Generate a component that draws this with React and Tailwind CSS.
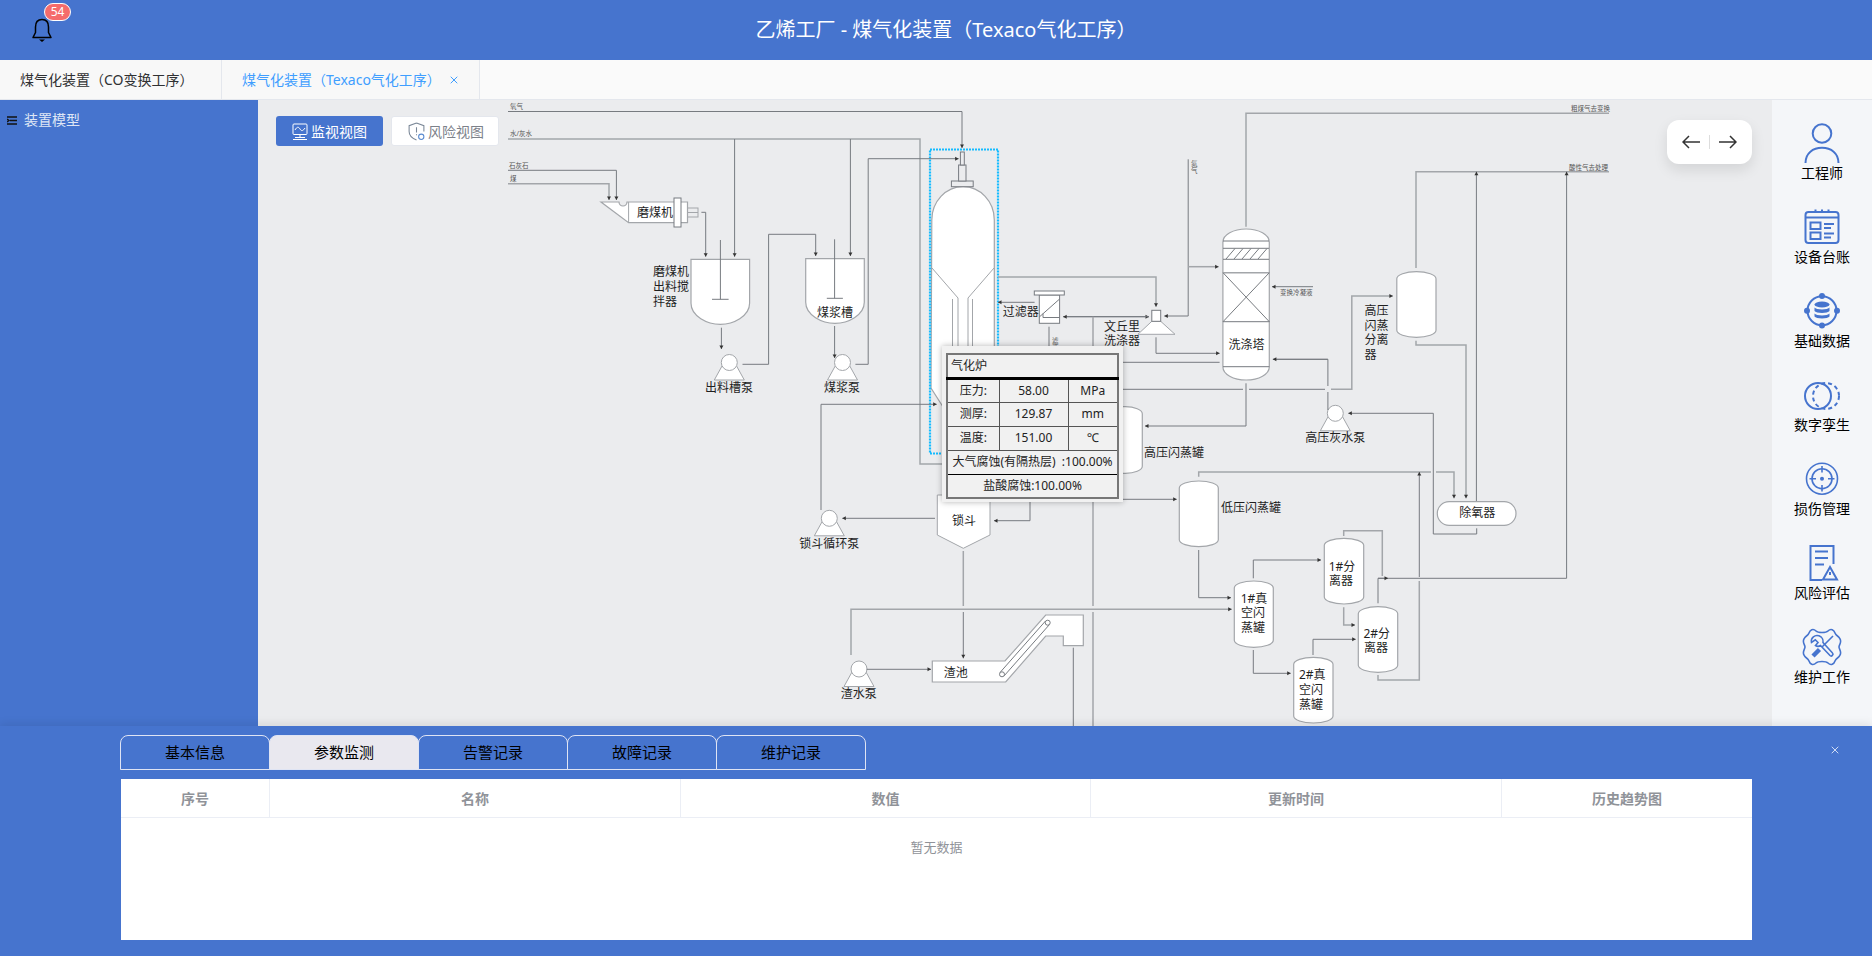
import React from 'react';
import { X } from 'lucide-react';

const BLUE = '#4674ce';
const LINE = '#777b80';
const SOFT = '#a3a6aa';

// pipes in page coordinates: p = points, a = arrow at the end, s = lighter/thicker stroke
const pipes = [
  { p: [[508, 111.5], [962, 111.5], [962, 148]], a: true },
  { p: [[508, 139], [920, 139], [920, 464], [945, 464]], s: true },
  { p: [[508, 170.3], [616.4, 170.3], [616.4, 200]], a: true },
  { p: [[508, 183.7], [609, 183.7], [609, 200]], a: true, s: true },
  { p: [[701.4, 212.3], [705.7, 212.3], [705.7, 256.7]], a: true },
  { p: [[734.6, 139], [734.6, 256.7]], a: true },
  { p: [[721.4, 327.7], [721.4, 349]], a: true },
  { p: [[742.5, 364.3], [768.6, 364.3], [768.6, 234.3], [815.7, 234.3], [815.7, 256]], a: true },
  { p: [[850.4, 139], [850.4, 256]], a: true },
  { p: [[834.6, 326], [834.6, 358]], a: true },
  { p: [[855.4, 364.3], [868.2, 364.3], [868.2, 158.7], [958.6, 158.7]], a: true },
  { p: [[1034.6, 302.3], [998, 302.3]], a: true },
  { p: [[998, 277], [1156, 277], [1156, 306.7]], a: true, s: true },
  { p: [[1063.2, 316.7], [1149, 316.7]], a: true },
  { p: [[1149, 316.7], [1063.2, 316.7]], a: true },
  { p: [[1093, 316.7], [1093, 606]], s: true },
  { p: [[1093, 612], [1093, 726]], s: true },
  { p: [[1049, 326.7], [1049, 350]] },
  { p: [[1188.2, 159.3], [1188.2, 316], [1164.3, 316]], a: true },
  { p: [[1188.2, 266.7], [1218.6, 266.7]], a: true, s: true },
  { p: [[1156, 337.3], [1156, 353.3], [1219.6, 353.3]], a: true },
  { p: [[1120, 362.3], [1219.6, 362.3]] },
  { p: [[1120, 389.3], [1243, 389.3]] },
  { p: [[1249, 389.3], [1325, 389.3]] },
  { p: [[1331, 389.3], [1351.8, 389.3], [1351.8, 296], [1392.9, 296]], a: true, s: true },
  { p: [[1246, 383.3], [1246, 426], [1145, 426]], a: true },
  { p: [[1246, 226.7], [1246, 113.3], [1609, 113.3]], s: true },
  { p: [[1416, 268], [1416, 171.7], [1609, 171.7]], s: true },
  { p: [[1416, 340.7], [1416, 345], [1466, 345], [1466, 498.3]], a: true, s: true },
  { p: [[1476.4, 501], [1476.4, 171.7]], a: true },
  { p: [[1566.6, 578.3], [1566.6, 171.7]], a: true },
  { p: [[1272.9, 359.3], [1327.9, 359.3], [1327.9, 386]] },
  { p: [[1327.9, 392], [1327.9, 410]] },
  { p: [[1327.9, 359.3], [1272.9, 359.3]], a: true },
  { p: [[1313, 286.7], [1272, 286.7]], a: true },
  { p: [[1476.7, 528.3], [1476.7, 534], [1433.3, 534], [1433.3, 413.3], [1348.3, 413.3]], a: true },
  { p: [[1198.7, 476.7], [1198.7, 472], [1431, 472]], s: true },
  { p: [[1436, 472], [1454, 472], [1454, 498.3]], a: true, s: true },
  { p: [[1120, 499.3], [1176.7, 499.3]], a: true },
  { p: [[1030, 500], [1030, 520.7], [994, 520.7]], a: true },
  { p: [[935, 518.3], [842.3, 518.3]], a: true },
  { p: [[821, 510], [821, 404.3], [936.7, 404.3]], a: true },
  { p: [[963.3, 551], [963.3, 606]], s: true },
  { p: [[963.3, 612], [963.3, 658.3]], a: true },
  { p: [[851, 655], [851, 609.3], [1231.7, 609.3]], a: true, s: true },
  { p: [[866.7, 669.3], [931, 669.3]], a: true },
  { p: [[1073.3, 647.7], [1073.3, 726]] },
  { p: [[1198.7, 550], [1198.7, 597.7], [1231, 597.7]], a: true },
  { p: [[1253.3, 578.3], [1253.3, 560], [1321, 560]], a: true },
  { p: [[1253.3, 650], [1253.3, 673.3], [1290.7, 673.3]], a: true },
  { p: [[1343.7, 536], [1343.7, 530.7], [1382.3, 530.7], [1382.3, 576]], s: true },
  { p: [[1566.6, 578.3], [1378, 578.3]] },
  { p: [[1378, 603.3], [1378, 578.3], [1388, 578.3]], a: true },
  { p: [[1343.7, 607.3], [1343.7, 625], [1355, 625]], a: true, s: true },
  { p: [[1313, 655], [1313, 639.3], [1355.7, 639.3]], a: true },
  { p: [[1378, 675], [1378, 680], [1419.3, 680], [1419.3, 581]], s: true },
  { p: [[1419.3, 577], [1419.3, 472]], a: true },
];

const labels = [
  ['磨煤机', 655, 212.7],
  ['煤浆槽', 835, 312],
  ['出料槽泵', 729, 387.3],
  ['煤浆泵', 842, 387],
  ['过滤器', 1020.7, 311.7],
  ['洗涤塔', 1246.4, 344],
  ['高压闪蒸罐', 1174, 452.7],
  ['低压闪蒸罐', 1251, 507.7],
  ['锁斗', 964, 520.7],
  ['锁斗循环泵', 829.3, 543.3],
  ['渣水泵', 858.7, 693.3],
  ['渣池', 955.7, 672],
  ['高压灰水泵', 1335.3, 437.3],
  ['除氧器', 1477.3, 512.7],
  ['1#真', 1254, 598.3],
  ['空闪', 1253, 612.7],
  ['蒸罐', 1253, 627.3],
  ['1#分', 1342, 566],
  ['离器', 1341, 580.3],
  ['2#分', 1376.7, 633.3],
  ['离器', 1376, 647.3],
  ['2#真', 1312.3, 674.3],
  ['空闪', 1311, 689.3],
  ['蒸罐', 1311, 704],
  ['磨煤机', 671, 271.7],
  ['出料搅', 671, 286.7],
  ['拌器', 665, 301.7],
  ['文丘里', 1122, 326],
  ['洗涤器', 1122, 340.7],
  ['高压', 1376.6, 310],
  ['闪蒸', 1376.6, 325],
  ['分离', 1376.6, 339.3],
  ['器', 1370.6, 354],
];

const tinyLabels = [
  ['氧气', 510, 106],
  ['水/灰水', 510, 133],
  ['石灰石', 509, 165],
  ['煤', 510, 178],
  ['粗煤气去变换', 1571, 108],
  ['酸性气去处理', 1569, 167],
  ['变换冷凝液', 1280, 292],
  ['氮', 1191, 163],
  ['气', 1191, 170],
  ['滤', 1052, 340],
  ['液', 1052, 347],
];

const arrowHead = (pts) => {
  const [x1, y1] = pts[pts.length - 2];
  const [x2, y2] = pts[pts.length - 1];
  const len = Math.hypot(x2 - x1, y2 - y1) || 1;
  const ux = (x2 - x1) / len;
  const uy = (y2 - y1) / len;
  const bx = x2 - ux * 3.5;
  const by = y2 - uy * 3.5;
  return `${x2},${y2} ${bx - uy * 2},${by + ux * 2} ${bx + uy * 2},${by - ux * 2}`;
};

const capsule = (x, y, w, h, c) =>
  `M${x} ${y + c}A${w / 2} ${c} 0 0 1 ${x + w} ${y + c}V${y + h - c}A${w / 2} ${c} 0 0 1 ${x} ${y + h - c}Z`;

const Vessel = ({ x, y, w, h, c = 7 }) => (
  <path d={capsule(x, y, w, h, c)} fill="#fff" stroke={SOFT} strokeWidth="1.2" />
);

const Pump = ({ cx, cy }) => (
  <g fill="#fff" stroke={SOFT} strokeWidth="1">
    <polygon points={`${cx - 15},${cy + 17.5} ${cx + 15},${cy + 17.5} ${cx + 7},${cy + 3} ${cx - 7},${cy + 3}`} />
    <circle cx={cx} cy={cy} r="8" />
  </g>
);

const Tank = ({ x, y, w, h }) => (
  <path
    d={`M${x} ${y}H${x + w}V${y + h - 21}C${x + w} ${y + h - 8} ${x + w * 0.72} ${y + h} ${x + w / 2} ${y + h}C${x + w * 0.28} ${y + h} ${x} ${y + h - 8} ${x} ${y + h - 21}Z`}
    fill="#fff"
    stroke={SOFT}
    strokeWidth="1.2"
  />
);

const Diagram = () => (
  <svg className="absolute left-0 top-0" width="1514" height="626" viewBox="258 100 1514 626" fill="none">
    {/* grinder */}
    <path
      d="M601 202H619A4 4 0 0 0 627 202H687.5V222.7H628.6Z"
      fill="#fff"
      stroke={SOFT}
      strokeWidth="1.2"
    />
    <path d="M628.6 202V222.7" stroke={SOFT} />
    <rect x="674" y="198" width="7" height="29" fill="#fff" stroke={LINE} />
    <rect x="687.5" y="208" width="10.5" height="9" stroke={SOFT} />
    <path d="M687.5 212.5H698" stroke={SOFT} />

    <Tank x={691} y={259.3} w={58.6} h={65} />
    <path d="M720.4 240V299.3M712 299.3H728.6" stroke={LINE} />
    <Tank x={805.7} y={258.7} w={58.6} h={64.6} />
    <path d="M834.6 239.3V298.3M826.8 298.3H842.9" stroke={LINE} />

    {/* gasifier */}
    <path d="M931.8 220A31.25 33.3 0 0 1 994.3 220V388L980 410H945L931 388Z" fill="#fff" stroke={SOFT} strokeWidth="1.2" />
    <path d="M932 268L958 298V346M994 268L968 298V346M952.5 299V346M972.5 299V346" stroke={SOFT} />
    <rect x="951.4" y="181" width="21.8" height="5.7" fill="#ebecee" stroke={LINE} />
    <rect x="958.6" y="165" width="7.4" height="16" fill="#ebecee" stroke={LINE} />
    <rect x="960.4" y="152" width="3.9" height="13" fill="#ebecee" stroke={LINE} />
    <rect x="930" y="149.5" width="68" height="304" stroke="#14bbff" strokeWidth="2.2" strokeDasharray="2 1" />

    {/* filter */}
    <rect x="1039.3" y="295" width="20.3" height="28.3" fill="#fff" stroke={LINE} />
    <rect x="1034.3" y="291" width="30" height="4" fill="#fff" stroke={LINE} />
    <path d="M1039.3 317L1059.6 299M1043 313.5V317.5H1059.6" stroke={LINE} />

    {/* venturi */}
    <polygon points="1137.9,334.3 1175,334.3 1160.7,321.3 1151.8,321.3" fill="#fff" stroke={SOFT} />
    <rect x="1151.8" y="310.3" width="8.9" height="11" fill="#fff" stroke={LINE} />

    {/* washer */}
    <Vessel x={1222.9} y={229} w={46.4} h={151} c={13} />
    <path d="M1223 241H1269M1223 248.3H1269M1223 259.3H1269" stroke={LINE} />
    <path d="M1223 272.7H1269.3" stroke={SOFT} strokeWidth="1.6" />
    <path d="M1223 321.7H1269.3M1223 366.7H1269.3M1223 272.7L1269.3 321.7M1269.3 272.7L1223 321.7" stroke={LINE} />
    <path d="M1226 259L1235 248.5M1234 259L1243 248.5M1242 259L1251 248.5M1250 259L1259 248.5M1258 259L1267 248.5" stroke={LINE} />

    <Vessel x={1396.8} y={271.7} w={39.2} h={65.6} />
    <Vessel x={1179.3} y={481} w={39} h={65.7} />
    <path d="M1100 406.7H1125A17 7 0 0 1 1142.3 413.7V466.3A17 7 0 0 1 1125 473.3H1100Z" fill="#fff" stroke={SOFT} strokeWidth="1.2" />
    <Vessel x={1234.3} y={581} w={39} h={66.3} />
    <Vessel x={1324.3} y={538.3} w={39.4} h={65.7} />
    <Vessel x={1358.3} y={606.7} w={39.4} h={65.6} />
    <Vessel x={1293.7} y={657.3} w={39.3} h={65.7} />
    <rect x="1437.3" y="501.7" width="78.7" height="23.6" rx="11.8" fill="#fff" stroke={SOFT} strokeWidth="1.2" />

    {/* lock hopper */}
    <polygon points="937.3,495 990,495 990,535 963.3,548.3 937.3,535" fill="#fff" stroke={SOFT} />

    {/* slag pool and conveyor */}
    <polygon
      points="932.3,661 1005,661 1045.7,615 1083.3,615 1083.3,645.7 1063.3,645.7 1063.3,636 1045.7,636 1005.7,682 932.3,682"
      fill="#fff"
      stroke={SOFT}
      strokeWidth="1.2"
    />
    <path d="M1000 672.5L1045.5 621M1004 676L1049.5 624.5" stroke={LINE} />
    <circle cx="1002" cy="674.3" r="2.5" fill="#fff" stroke={LINE} />
    <circle cx="1047.7" cy="622.7" r="2.5" fill="#fff" stroke={LINE} />

    <Pump cx={729.3} cy={362.5} />
    <Pump cx={842.5} cy={362.5} />
    <Pump cx={829.3} cy={518.3} />
    <Pump cx={859} cy={669} />
    <Pump cx={1335.3} cy={413.3} />

    {pipes.map((pipe, i) => (
      <g key={i}>
        <polyline
          points={pipe.p.map((pt) => pt.join(',')).join(' ')}
          stroke={pipe.s ? SOFT : LINE}
          strokeWidth={pipe.s ? 1.5 : 1}
        />
        {pipe.a && <polygon points={arrowHead(pipe.p)} fill="#333" />}
      </g>
    ))}

    {labels.map(([t, x, y], i) => (
      <text key={i} x={x} y={y} textAnchor="middle" dominantBaseline="central" fontSize="12" fill="#1f1f1f">
        {t}
      </text>
    ))}
    {tinyLabels.map(([t, x, y], i) => (
      <text key={i} x={x} y={y} fontSize="6.5" fill="#555" dominantBaseline="central">
        {t}
      </text>
    ))}
  </svg>
);

const Popup = () => (
  <div className="absolute left-[684px] top-[246px] w-[181px] h-[156px] bg-[#f1f1f1] shadow-[0_0_6px_rgba(0,0,0,0.3)] pl-[4px] pt-[7px]">
    <table className="w-[173px] h-[146px] border-2 border-[#777] border-collapse table-fixed text-[12px] text-[#222] text-center">
      <colgroup>
        <col className="w-[52px]" />
        <col className="w-[69px]" />
        <col />
      </colgroup>
      <tbody>
        <tr className="h-[24px] border-b-[3px] border-black">
          <td colSpan={3} className="text-left pl-[3px]">气化炉</td>
        </tr>
        {[
          ['压力:', '58.00', 'MPa'],
          ['测厚:', '129.87', 'mm'],
          ['温度:', '151.00', '℃'],
        ].map(([a, b, c]) => (
          <tr key={a} className="h-[24px] border-b border-[#555]">
            <td className="border-r border-[#555]">{a}</td>
            <td className="border-r border-[#555]">{b}</td>
            <td>{c}</td>
          </tr>
        ))}
        <tr className="h-[24px] border-b border-black">
          <td colSpan={3} className="whitespace-nowrap">大气腐蚀(有隔热层) &nbsp;:100.00%</td>
        </tr>
        <tr className="h-[24px]">
          <td colSpan={3}>盐酸腐蚀:100.00%</td>
        </tr>
      </tbody>
    </table>
  </div>
);

const EngineerIcon = () => (
  <svg width="40" height="40" viewBox="0 0 40 40" fill="none" stroke={BLUE} strokeWidth="2">
    <circle cx="20" cy="10.5" r="9.3" />
    <path d="M3.5 40C3.5 30 11 24.8 20 24.8S36.5 30 36.5 40" />
  </svg>
);

const LedgerIcon = () => (
  <svg width="40" height="40" viewBox="0 0 40 40" fill="none" stroke={BLUE} strokeWidth="2">
    <rect x="3.5" y="5" width="33" height="31" rx="3" />
    <path d="M3.5 10.5H36.5M13.5 2.5V5.5M20 2.5V5.5M26.5 2.5V5.5" />
    <rect x="8.5" y="15.5" width="10" height="6.5" />
    <rect x="8.5" y="25.5" width="10" height="6.5" />
    <path d="M22 17H32M22 21H29M22 26.5H32M22 30.5H29" />
  </svg>
);

const DataIcon = () => (
  <svg width="40" height="40" viewBox="0 0 40 40" fill="none">
    <circle cx="20" cy="19.7" r="14.5" stroke={BLUE} strokeWidth="2" />
    <g fill={BLUE}>
      <circle cx="20" cy="5" r="3" />
      <circle cx="20" cy="34.5" r="3" />
      <circle cx="5" cy="19.7" r="3" />
      <circle cx="35" cy="19.7" r="3" />
      <ellipse cx="20" cy="13.5" rx="7.5" ry="3" />
      <path d="M12.5 16.5C14 19 26 19 27.5 16.5V20C26 22.5 14 22.5 12.5 20Z" />
      <path d="M12.5 22.5C14 25 26 25 27.5 22.5V25.5C26 28 14 28 12.5 25.5Z" />
    </g>
  </svg>
);

const TwinIcon = () => (
  <svg width="40" height="40" viewBox="0 0 40 40" fill="none" stroke={BLUE} strokeWidth="2">
    <circle cx="16" cy="21" r="13" />
    <circle cx="24" cy="21" r="13" strokeDasharray="4 3" />
  </svg>
);

const TargetIcon = () => (
  <svg width="40" height="40" viewBox="0 0 40 40" fill="none" stroke={BLUE} strokeWidth="1.6">
    <circle cx="20" cy="19.7" r="15.5" />
    <circle cx="20" cy="19.7" r="10" />
    <path d="M20 7V13.5M20 26V32.5M7.5 19.7H14M26 19.7H32.5" />
    <circle cx="20" cy="19.7" r="1.2" fill={BLUE} />
  </svg>
);

const ReportIcon = () => (
  <svg width="40" height="40" viewBox="0 0 40 40" fill="none" stroke={BLUE} strokeWidth="2">
    <path d="M20 37H8.5V3H31.5V21" />
    <path d="M13 8.5H26M13 15H26M13 21.5H22" />
    <path d="M28 24L35 36.5H21Z" />
    <path d="M28 29V32" />
  </svg>
);

const ToolIcon = () => (
  <svg width="40" height="40" viewBox="0 0 40 40" fill="none" stroke={BLUE} strokeWidth="1.6">
    <path d="M14 4C16 6 24 6 26 4C29 1 32 3 33 6C34 9 37 9 38 12C40 15 37 18 37 20C37 22 40 25 38 28C37 31 34 31 33 34C32 37 29 39 26 36C24 34 16 34 14 36C11 39 8 37 7 34C6 31 3 31 2 28C0 25 3 22 3 20C3 18 0 15 2 12C3 9 6 9 7 6C8 3 11 1 14 4Z" />
    <path d="M17 8.8C13 7.5 8.5 10.5 9.5 15.5L13.3 12.8L16 15.5L13.5 18.5C15 19.5 17 19.5 18.5 18.5L28 28.5C29.5 30 32 27.5 30.5 26L21 15.5C21.5 13 20 10 17 8.8Z" />
    <path d="M31 9L20 20" />
    <path d="M17.5 22.5L11 29" strokeWidth="4.5" />
  </svg>
);

const navItems = [
  ['工程师', EngineerIcon],
  ['设备台账', LedgerIcon],
  ['基础数据', DataIcon],
  ['数字孪生', TwinIcon],
  ['损伤管理', TargetIcon],
  ['风险评估', ReportIcon],
  ['维护工作', ToolIcon],
];

const bottomTabs = ['基本信息', '参数监测', '告警记录', '故障记录', '维护记录'];

const columns = [
  ['序号', 'w-[149px]'],
  ['名称', 'w-[411px]'],
  ['数值', 'w-[410px]'],
  ['更新时间', 'w-[411px]'],
  ['历史趋势图', 'flex-1'],
];

const App = () => {
  return (
    <div
      className="w-[1872px] h-[956px] flex flex-col overflow-hidden"
      style={{ fontFamily: '"Noto Sans", "Noto Sans CJK SC", sans-serif' }}
    >
      {/* header */}
      <div className="relative h-[60px] shrink-0 bg-[#4674ce] flex items-center justify-center pl-[20px]">
        <div className="absolute left-[32px] top-[18px]">
          <svg width="20" height="24" viewBox="0 0 20 24" fill="none">
            <path d="M10 1.5C5.5 1.5 3.5 5 3.5 9V14.5L1 19.5H19L16.5 14.5V9C16.5 5 14.5 1.5 10 1.5Z" stroke="#000" strokeWidth="1.5" strokeLinejoin="round" />
            <path d="M7 21.5H13L10 24Z" fill="#000" />
          </svg>
        </div>
        <span className="absolute left-[44px] top-[3px] w-[27px] h-[18px] rounded-full bg-[#f56c6c] border border-white text-white text-[12px] leading-[16px] text-center">
          54
        </span>
        <span className="text-white text-[20px]">乙烯工厂 - 煤气化装置（Texaco气化工序）</span>
      </div>

      {/* tab strip */}
      <div className="h-[40px] shrink-0 bg-[#fafafa] border-b border-[#e4e7ed] flex text-[14px]">
        <div className="w-[222px] bg-[#f8f8f8] border-r border-[#e4e7ed] pl-[20px] flex items-center text-[#303133]">
          煤气化装置（CO变换工序）
        </div>
        <div className="w-[258px] bg-[#f8f8f8] border-r border-[#e4e7ed] pl-[20px] flex items-center text-[#409eff]">
          <span>煤气化装置（Texaco气化工序）</span>
          <X size={12} className="ml-auto mr-[19px]" />
        </div>
      </div>

      {/* main */}
      <div className="flex-1 flex min-h-0">
        <div className="w-[258px] shrink-0 bg-[#4674ce] pt-[9px] pl-[7px] flex items-start gap-[7px] text-[14px] text-[#dfe6f5]">
          <svg className="mt-[7px]" width="10" height="9" viewBox="0 0 10 9" fill="none" stroke="#111" strokeWidth="1.4">
            <path d="M0 1H10M3 4.5H10M0 8H10" />
            <path d="M0 3L2 4.5L0 6" />
          </svg>
          <span>装置模型</span>
        </div>

        <div className="relative flex-1 bg-[#ebecee] overflow-hidden">
          <Diagram />
          <Popup />

          <div className="absolute left-[18px] top-[16px] flex gap-[8px] text-[14px]">
            <div className="w-[107px] h-[30px] rounded-[3px] bg-[#4674ce] text-white flex items-center justify-center gap-[3px]">
              <svg width="16" height="17" viewBox="0 0 16 17" fill="none" stroke="#fff" strokeWidth="1">
                <rect x="1" y="1" width="14" height="10.5" rx="1" />
                <path d="M3 7C5 3.5 6.5 3.5 8 6S11 8 13 5M8 11.5V14.5M3 14.5H13M1 16.5H15" />
              </svg>
              <span>监视视图</span>
            </div>
            <div className="w-[108px] h-[30px] rounded-[3px] bg-white border border-[#e4e7ed] text-[#7c818a] flex items-center justify-center gap-[3px] pl-[2px]">
              <svg width="17" height="19" viewBox="0 0 16 18" fill="none" stroke="#7a8797" strokeWidth="1">
                <path d="M8 1L15 3.5V9M8 17C4 15.5 1 13 1 9V3.5L8 1" />
                <path d="M8 5V10M8 11.5V12.5" />
                <circle cx="12.5" cy="14" r="2.5" stroke="#5a8bd0" />
              </svg>
              <span>风险视图</span>
            </div>
          </div>

          <div className="absolute left-[1409px] top-[20px] w-[85px] h-[44px] rounded-[12px] bg-white shadow-[0_6px_14px_rgba(0,0,0,0.1)] flex items-center justify-center text-[#333]">
            <svg width="18" height="14" viewBox="0 0 18 14" fill="none" stroke="#333" strokeWidth="1.5">
              <path d="M18 7H1M7 1L1 7L7 13" />
            </svg>
            <span className="w-px h-[14px] bg-[#ddd] mx-[9px]" />
            <svg width="18" height="14" viewBox="0 0 18 14" fill="none" stroke="#333" strokeWidth="1.5">
              <path d="M0 7H17M11 1L17 7L11 13" />
            </svg>
          </div>
        </div>

        <div className="w-[100px] shrink-0 bg-[#f4f6f9] pt-[23px] flex flex-col items-center">
          {navItems.map(([label, Icon]) => (
            <div key={label} className="h-[84px] flex flex-col items-center shrink-0">
              <Icon />
              <span className="text-[14px] leading-[20px] text-black">{label}</span>
            </div>
          ))}
        </div>
      </div>

      {/* bottom drawer */}
      <div className="relative h-[230px] shrink-0 bg-[#4674ce] shadow-[0_-3px_8px_rgba(0,0,0,0.08)] pl-[120px] pr-[120px] pt-[9px]">
        <div className="flex h-[35px]">
          {bottomTabs.map((tab, i) => (
            <div
              key={tab}
              className={`w-[150px] -mr-px border border-[#dfe4f4] rounded-t-[8px] flex items-center justify-center text-[15px] text-black ${
                i === 1 ? 'bg-[#e9e8ef]' : ''
              }`}
            >
              {tab}
            </div>
          ))}
        </div>
        <div className="mt-[9px] ml-px h-[161px] bg-white">
          <div className="flex h-[39px] border-b border-[#ebeef5] text-[14px] font-bold text-[#909399]">
            {columns.map(([name, width], i) => (
              <div
                key={name}
                className={`${width} flex items-center justify-center ${i < 4 ? 'border-r border-[#ebeef5]' : ''}`}
              >
                {name}
              </div>
            ))}
          </div>
          <div className="h-[60px] flex items-center justify-center text-[13px] text-[#909399]">暂无数据</div>
        </div>
        <X size={12} strokeWidth={1.5} className="absolute right-[31px] top-[18px] text-white" />
      </div>
    </div>
  );
};

export default App;
